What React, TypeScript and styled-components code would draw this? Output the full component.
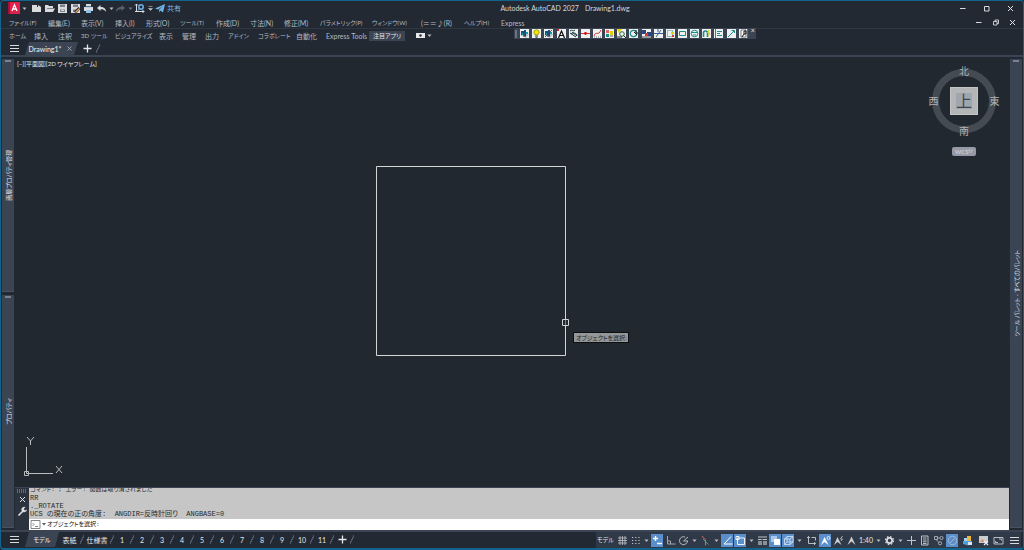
import React from "react";
import styled, { createGlobalStyle, css } from "styled-components";

const c = {
  bg: "#222933",
  canvas: "#212830",
  panel: "#3b4453",
  dark: "#2b333f",
  edge: "#12648c",
  text: "#b4b9c0",
  bright: "#e4e7ea",
  line: "#2f3743",
  active: "#5b8fcb",
};

const GlobalStyle = createGlobalStyle`
  * { box-sizing: border-box; }
  body {
    margin: 0;
    background: ${c.bg};
    font-family: Lato, "Noto Sans CJK JP", sans-serif;
    font-size: 7px;
    line-height: 10px;
    color: ${c.text};
    font-feature-settings: "palt";
  }
  button, input {
    font: inherit;
    color: inherit;
    font-feature-settings: inherit;
    background: none;
    border: 0;
    padding: 0;
    margin: 0;
    white-space: nowrap;
  }
  svg { display: block; flex: none; }
`;

const Window = styled.div`
  display: flex;
  flex-direction: column;
  min-height: 100vh;
  border: 1px solid ${c.edge};
  border-bottom-width: 2px;
  border-radius: 4px;
  background: ${c.bg};
  overflow: hidden;
  position: relative;
`;

/* ---------- top area ---------- */

const TitleBar = styled.header`
  display: grid;
  grid-template-columns: 1fr auto 1fr;
  align-items: center;
  height: 16px;
  padding: 0 1px 2px 7px;
`;

const QuickAccess = styled.div`
  display: flex;
  align-items: center;
`;

const AppButton = styled.button`
  display: flex;
  align-items: center;
  justify-content: center;
  width: 12px;
  height: 12px;
`;

const IconButton = styled.button<{ $w?: number }>`
  display: flex;
  align-items: center;
  justify-content: center;
  width: ${(p) => p.$w ?? 13}px;
  height: 12px;
`;

const Share = styled.button`
  display: flex;
  align-items: center;
  gap: 1px;
  margin-left: 1px;
  color: #7fb9e6;
`;

const Title = styled.h1`
  display: flex;
  gap: 6px;
  margin: 0;
  padding-left: 100px;
  font-size: 7px;
  font-weight: 400;
  color: #d6d9dd;
`;

const WindowButtons = styled.div<{ $w: number }>`
  display: flex;
  justify-content: flex-end;
  margin-left: auto;
  ${IconButton} {
    width: ${(p) => p.$w}px;
  }
`;

const MenuBar = styled.nav`
  display: flex;
  align-items: center;
  height: 12px;
  padding-left: 8px;
  padding-right: 2px;
  border-bottom: 1px solid ${c.line};
`;

const MenuItem = styled.button<{ $w: number; $kana?: boolean }>`
  width: ${(p) => p.$w}px;
  text-align: left;
  font-size: ${(p) => (p.$kana ? 6 : 7)}px;
`;

const Ribbon = styled.nav`
  display: flex;
  align-items: center;
  height: 13px;
  padding-left: 8px;
`;

const RibbonTab = styled(MenuItem)<{ $on?: boolean }>`
  ${(p) =>
    p.$on &&
    css`
      margin-left: -5px;
      text-align: center;
      background: ${c.panel};
      color: ${c.bright};
    `}
`;

const RibbonExtras = styled.div`
  display: flex;
  align-items: center;
  margin-left: 9px;
`;

const Toolbar = styled.div`
  position: absolute;
  top: 27px;
  left: 513px;
  width: 242px;
  height: 11px;
  padding: 0 1px;
  display: flex;
  align-items: center;
  justify-content: space-between;
  background: ${c.panel};
`;

const ToolGrip = styled.span`
  width: 2px;
  height: 8px;
  background: #6a7382;
`;

const Tool = styled.button`
  width: 9px;
  height: 9px;
  background: #eef0f0;
`;

const CloseTool = styled.button`
  align-self: flex-start;
  font-size: 7px;
  line-height: 5px;
  color: ${c.bright};
`;

const TabRow = styled.div`
  display: flex;
  align-items: center;
  height: 13px;
  padding-left: 8px;
`;

const SlantTab = styled.div<{ $w: number; $kana?: boolean }>`
  display: flex;
  align-items: center;
  justify-content: center;
  gap: 2px;
  align-self: stretch;
  width: ${(p) => p.$w}px;
  font-size: ${(p) => (p.$kana ? 6 : 7)}px;
  font-weight: 500;
  background: ${c.panel};
  color: ${c.bright};
  clip-path: polygon(4px 0, 100% 0, calc(100% - 4px) 100%, 0 100%);
  margin-left: 5px;
`;

const Band = styled.div`
  height: 2px;
  background: ${c.panel};
`;

/* ---------- work area ---------- */

const Work = styled.main`
  flex: 1;
  display: flex;
`;

const Dock = styled.aside`
  display: flex;
  flex-direction: column;
  gap: 3px;
  width: 14px;
  padding: 2px 1px;
`;

const Palette = styled.section`
  position: relative;
  flex: 1;
  display: flex;
  align-items: center;
  justify-content: center;
  background: ${c.panel};
  border-bottom: 1px solid #4a5362;
`;

const PaletteGrip = styled.span`
  position: absolute;
  top: 1px;
  left: 3px;
  width: 6px;
  height: 2px;
  background: #7a8290;
`;

const PaletteTitle = styled.h2`
  margin: 0;
  font-size: 6px;
  font-weight: 400;
  line-height: 11px;
  color: #dde0e4;
  writing-mode: vertical-rl;
  text-orientation: sideways;
  transform: rotate(180deg);
  white-space: nowrap;
`;

const Center = styled.div`
  flex: 1;
  min-width: 0;
  display: flex;
  flex-direction: column;
`;

const Canvas = styled.div`
  position: relative;
  flex: 1;
  background: ${c.canvas};
`;

const ViewLabel = styled.div`
  padding: 2px;
  font-size: 6px;
  color: #e4e7ea;
`;

const Sketch = styled.svg`
  position: absolute;
  left: 360px;
  top: 108px;
`;

const Prompt = styled.div`
  position: absolute;
  left: 558px;
  top: 275px;
  width: 56px;
  height: 11px;
  padding-left: 2px;
  font-size: 6px;
  line-height: 9px;
  color: #1c1f22;
  background: #949697;
  border: 1px solid #0c0e10;
  white-space: nowrap;
`;

const Ucs = styled.svg`
  position: absolute;
  left: 8px;
  bottom: 9px;
`;

const ViewCube = styled.div`
  position: absolute;
  right: 9px;
  top: 8px;
  width: 72px;
  height: 72px;
  display: grid;
  grid-template-columns: 11px 1fr 11px;
  grid-template-rows: 12px 1fr 12px;
  place-items: center;
  font-size: 10px;
  line-height: 12px;
  color: #b0b3b6;
  font-feature-settings: normal;
`;

const Ring = styled.span`
  position: absolute;
  left: 4px;
  top: 4px;
  width: 64px;
  height: 64px;
  border: 7px solid #444b53;
  border-radius: 50%;
`;

const Compass = styled.button<{ $area: string }>`
  grid-area: ${(p) => p.$area};
  position: relative;
`;

const CubeFace = styled.button`
  grid-area: 2 / 2;
  position: relative;
  width: 28px;
  height: 28px;
  padding: 5px;
  background: #b3b5b6;
  border: 1px solid #c4c6c6;
`;

const CubeInner = styled.span`
  display: block;
  height: 16px;
  line-height: 16px;
  font-size: 16px;
  background: #a1a6ae;
  color: #3f464f;
`;

const Wcs = styled.button`
  position: absolute;
  right: 33px;
  top: 90px;
  display: flex;
  align-items: center;
  justify-content: space-between;
  width: 24px;
  height: 9px;
  padding: 0 3px;
  border-radius: 2px;
  background: #969aa6;
  color: #d8dae0;
  font-size: 6px;
`;

const Command = styled.section`
  display: grid;
  grid-template-columns: 14px 1fr;
  border-top: 1px solid ${c.panel};
  background: ${c.dark};
`;

const CommandSide = styled.div`
  display: flex;
  flex-direction: column;
  align-items: center;
  padding-top: 1px;
`;

const CommandBody = styled.div`
  font-family: "Liberation Mono", "Noto Sans CJK JP", monospace;
  color: #26292c;
`;

const History = styled.div`
  display: flex;
  flex-direction: column;
  justify-content: flex-end;
  height: 31px;
  padding: 0 1px 1px;
  overflow: hidden;
  background: #c6c6c6;
`;

const HistoryLine = styled.div<{ $kana?: boolean }>`
  flex: none;
  height: 8px;
  font-size: ${(p) => (p.$kana ? 6 : 7)}px;
  line-height: 8px;
  white-space: pre;
`;

const InputLine = styled.label`
  display: flex;
  align-items: center;
  gap: 1px;
  height: 11px;
  padding-left: 1px;
  font-size: 6px;
  color: #101214;
  background: #ffffff;
  input {
    flex: 1;
    outline: 0;
  }
`;

/* ---------- status bar ---------- */

const Status = styled.footer`
  display: flex;
  align-items: stretch;
  justify-content: space-between;
  height: 16px;
  padding-right: 2px;
`;

const LayoutTabs = styled.div`
  display: flex;
  align-items: center;
  padding-left: 8px;
  padding-bottom: 1px;
`;

const LayoutTab = styled.button<{ $w: number }>`
  width: ${(p) => p.$w}px;
  font-size: 7px;
  color: ${c.bright};
`;

const Slash = styled.span`
  width: 4px;
  height: 9px;
  background: linear-gradient(to bottom right, transparent 40%, #505967 40%, #505967 60%, transparent 60%);
`;

const StatusTools = styled.div`
  display: flex;
  align-items: center;
  background: #303947;
`;

const StatusButton = styled.button<{ $w: number; $on?: boolean; $kana?: boolean }>`
  display: flex;
  align-items: center;
  justify-content: center;
  width: ${(p) => p.$w}px;
  height: 13px;
  font-size: ${(p) => (p.$kana ? 6 : 7)}px;
  color: ${c.bright};
  background: ${(p) => (p.$on ? c.active : "transparent")};
  background-clip: padding-box;
  border-right: 1px solid transparent;
`;

/* ---------- icons ---------- */

const glyphs: Record<string, React.ReactNode> = {
  caret: <path d="M3.5 4.500h4l-2 2.5z" fill="#b9bdc3" />,
  caretDim: <path d="M3.5 4.500h4l-2 2.5z" fill="#6d7580" />,
  newFile: <path d="M1 2h5v2h4v5H1zM7 2l3 2H7z" fill="#d9dbdd" />,
  open: <path d="M1 9V2h3l1 1h4v2H3.500L2 8l1.500-2.500H11L9 9z" fill="#d9dbdd" />,
  save: (
    <>
      <path d="M1 1h9v9H1z" fill="#d9dbdd" />
      <path d="M3 1.500h5V4H3zM3 6.500h5V9H3z" fill="#7b828d" />
      <path d="M4 7.500h3" stroke="#d9dbdd" />
    </>
  ),
  saveAs: (
    <>
      <path d="M1 1h9v9H1z" fill="#d9dbdd" />
      <path d="M3 1.500h5V4H3zM3 6.500h3V9H3z" fill="#7b828d" />
      <path d="M5 9.500L9.500 5" stroke="#222933" strokeWidth="3" />
      <path d="M5.500 9.500L9.500 5.500" stroke="#e9a25b" strokeWidth="1.500" />
    </>
  ),
  print: (
    <>
      <path d="M3 1h5v2H3zM1 4h9v4H1z" fill="#d9dbdd" />
      <path d="M3 7h5v3H3z" fill="#8cc4ee" />
      <path d="M2.500 4h6" stroke="#8cc4ee" />
    </>
  ),
  undo: <path d="M1 5l3.500-3v2C8 4 10 5.500 10 9 8.500 6.500 7 6.200 4.500 6.200V8z" fill="#d9dbdd" />,
  redo: <path d="M10 5L6.500 2v2C3 4 1 5.500 1 9c1.500-2.500 3-2.800 5.500-2.800V8z" fill="#566070" />,
  axes: (
    <g fill="none">
      <path d="M2.500 1v7.500H10M1 2.500L2.500 1 4 2.500M8.500 7L10 8.500 8.500 10M1 8.500h3" stroke="#d9dbdd" />
      <circle cx="7" cy="4" r="2.200" stroke="#6fb3e8" strokeWidth="1.500" />
      <path d="M5.500 5.500L4 7.500" stroke="#6fb3e8" />
    </g>
  ),
  more: <path d="M3.500 3.500h4M3.500 5.500h4l-2 2z" stroke="#b9bdc3" strokeWidth=".6" fill="#b9bdc3" />,
  plane: <path d="M0 5.500L10 1 8 9.500 5.500 7.500 4.500 9.500 4 6.800 8 3 3 6.500z" fill="#6fb3e8" />,
  min: <path d="M3 5.500h5.500" stroke="#d9dbdd" />,
  max: <path d="M3.500 3.500h4.500v4.500H3.500z" stroke="#d9dbdd" fill="none" />,
  close: <path d="M3 3l5 5M8 3L3 8" stroke="#e4e7ea" />,
  restore: <path d="M3.500 4.500h3.500v3.500H3.500zM5 4.500V3h3.500v3.500H7" stroke="#d9dbdd" strokeWidth=".9" fill="none" />,
  burger: <path d="M1 2.500h9M1 5.500h9M1 8.500h9" stroke="#d9dbdd" strokeWidth="1.200" />,
  plus: <path d="M5.500 1.500v8M1.500 5.500h8" stroke="#e4e7ea" strokeWidth="1.300" />,
  tabX: <path d="M3.500 3.500l4 4M7.500 3.500l-4 4" stroke="#9aa1aa" />,
  panel: (
    <>
      <path d="M1 3h9v5H1z" fill="#e6e8ea" />
      <circle cx="5.500" cy="5.500" r="1.200" fill="#222933" />
    </>
  ),
  wrench: (
    <>
      <path d="M1.500 9.500L6 5" stroke="#d9dbdd" strokeWidth="1.700" />
      <path d="M8.500 1A2.800 2.800 0 1 0 10 3.500L8 4.500 6.800 3z" fill="#d9dbdd" />
    </>
  ),
  grid: <path d="M3 1v9M5.500 1v9M8 1v9M1 3h9M1 5.500h9M1 8h9" stroke="#c3c7cc" strokeWidth=".8" />,
  dots: <path d="M2 2.500h8M2 5.500h8M2 8.500h8" stroke="#c3c7cc" strokeWidth="1.200" strokeDasharray="1.200 2" />,
  dyn: <path d="M3.500 1v5M1 3.500h5M5 8.500h5" stroke="#fff" strokeWidth="1.300" />,
  ortho: <path d="M2.500 1v8h8M2.500 6h3v3" stroke="#aeb3ba" strokeWidth=".9" fill="none" />,
  polar: (
    <g fill="none" stroke="#c3c7cc" strokeWidth=".9">
      <path d="M9.500 6A4 4 0 1 1 7 2" />
      <path d="M10 2L5.500 6H10" />
    </g>
  ),
  iso: (
    <>
      <path d="M5.500 5v5.500M5.500 5L2 1" stroke="#d4686f" />
      <path d="M8.500 9.500L3 4" stroke="#5fae83" strokeWidth=".8" />
    </>
  ),
  angle: <path d="M9 1.500L2 9h8.500" stroke="#fff" fill="none" />,
  osnap: <path d="M2.500 3h7v6.500h-7zM1 1.500h3v3H1z" stroke="#fff" strokeWidth=".9" fill="none" />,
  weight: (
    <>
      <path d="M1 2h9M1 4.500h3.500M5.500 4.500h4.500" stroke="#c3c7cc" />
      <path d="M1 7h4M6 7h4M1 9h4M6 9h4" stroke="#e4e7ea" strokeWidth="1.200" />
    </>
  ),
  transp: (
    <>
      <path d="M1 1h6v6H1z" fill="#a9c8ea" />
      <path d="M4 4h6v6H4z" fill="#fff" />
    </>
  ),
  cube: <path d="M1.500 4h5.500v5.500H1.500zM1.500 4L4 1.500h6L7 4M10 1.500V7L7 9.500M4 1.500V7h6M4 7L1.500 9.500" stroke="#e6f0fa" strokeWidth=".7" fill="none" />,
  ucs: <path d="M2.500 1.500v7h7M1 3l1.500-1.500L4 3M8 7l1.500 1.500L8 10M5.500 2.500h4v3" stroke="#c9cdd2" strokeWidth=".9" fill="none" />,
  annoA: (
    <>
      <path d="M1 10L4.500 2 8.500 10 4.500 7z" fill="#fff" />
      <circle cx="8.500" cy="3" r="1.500" fill="none" stroke="#fff" strokeWidth=".8" />
    </>
  ),
  annoB: (
    <>
      <path d="M1 10L4.500 2 8.500 10 4.500 7z" fill="#c9cdd2" />
      <path d="M9.500 1L7.500 4h2L8 6" stroke="#c9cdd2" strokeWidth=".8" fill="none" />
    </>
  ),
  annoC: <path d="M1.500 10L5.500 1.500 9.500 10 5.500 6.500z" fill="#c9cdd2" />,
  gear: (
    <>
      <circle cx="5.500" cy="5.500" r="2.600" fill="none" stroke="#d9dbdd" strokeWidth="1.800" />
      <circle cx="5.500" cy="5.500" r="4" fill="none" stroke="#d9dbdd" strokeWidth="1.300" strokeDasharray="1.600 1.540" />
    </>
  ),
  plusThin: <path d="M5.500 1v9M1 5.500h9" stroke="#c3c7cc" />,
  list: (
    <g fill="none" stroke="#c9cdd2" strokeWidth=".9">
      <path d="M2.500 1h6.500v9H2.500zM4 3h3.500M4 5h3.500M4 6.800h3.500M4 8.500h3.500" />
    </g>
  ),
  nodes: (
    <g fill="none" stroke="#aeb3ba" strokeWidth=".9">
      <path d="M1.500 1.500h3v3h-3zM4.500 3h2M3 4.500l3 3" />
      <circle cx="8.500" cy="3" r="1.600" />
      <circle cx="7" cy="8.300" r="1.600" />
    </g>
  ),
  clean: (
    <g fill="none" stroke="#a9bdd6" strokeWidth=".9">
      <circle cx="5.500" cy="5.500" r="4.300" />
      <path d="M3 8l5-5" />
    </g>
  ),
  hardware: (
    <>
      <path d="M5 1h4v5H5z" fill="#e9b93d" />
      <path d="M1 6h9v3l-4 1.500L1 9z" fill="#4f9ee0" />
      <path d="M2 3h3v3H2z" fill="#a8d0f2" />
      <path d="M6 7h4v3H6z" fill="#dfe6ee" />
    </>
  ),
  picture: (
    <>
      <path d="M1 1h9v7H1z" fill="#c9cdd2" />
      <path d="M2 7l2.500-3L7 7z" fill="#e08c6a" />
      <path d="M6 6l4 4M10 6l-4 4" stroke="#e9edf0" strokeWidth="1.200" />
    </>
  ),
  full: <path d="M1 2.500h9v6.500H1zM6 4h2.500v1.500M5 7.500H2.500V6" stroke="#c9cdd2" strokeWidth=".9" fill="none" />,
  prompt: <path d="M1 1.500h9v8H1zM2.500 4L4 5.500 2.500 7M5 7.500h3" stroke="#62676c" strokeWidth=".8" fill="none" />,
  promptCaret: <path d="M0 4h4L2 6.500z" fill="#555a5f" />,
};

const Icon = ({ name, w = 11 }: { name: string; w?: number }) => (
  <svg width={w} height={11} viewBox={`0 0 ${w} 11`} aria-hidden="true">
    {glyphs[name]}
  </svg>
);

const T = "#1f8a8a";
const layerArt = (
  <>
    <path d="M0 6l3-2 6 1-3 4z" fill="#b8bcc4" />
    <path d="M1 2h3v4H1zM4 1h2v6H4z" fill="#1d4f7e" />
    <path d="M6 3h2v2H6zM2 4h1v2H2z" fill="#15a0b0" />
    <path d="M3 7h3" stroke="#333" />
  </>
);
const tools: [string, React.ReactNode][] = [
  ["画層", layerArt],
  [
    "画層 表示",
    <>
      <circle cx="4.5" cy="3.300" r="2.600" fill="#f5e500" stroke="#8a8200" strokeWidth=".7" />
      <path d="M3 7h3M3.500 8.300h2" stroke="#444" />
    </>,
  ],
  [
    "画層 非表示",
    <>
      {layerArt}
      <path d="M1 8l7-7" stroke="#333" strokeWidth=".8" />
    </>,
  ],
  [
    "文字",
    <>
      <path d="M1.500 9l3-7 3 7M3 6.500h3" stroke="#111" strokeWidth="1.200" fill="none" />
      <path d="M0 0h2v2H0z" fill="#d22" />
    </>,
  ],
  ["ハッチング", <path d="M1 2c2-2 3 1 5-1M1 4l6 4M3 3l5 4c0-3-4-4-6-2" stroke="#1b3a3a" fill="none" />],
  [
    "点",
    <>
      <path d="M0 4.500h9" stroke="#d33" />
      <circle cx="4.5" cy="4.500" r="1.400" fill="#c11" />
    </>,
  ],
  [
    "スプライン",
    <>
      <path d="M1 7C3 1 5 8 8 1" stroke="#d33" fill="none" />
      <path d="M1 8h7" stroke="#666" strokeDasharray="1 1" />
    </>,
  ],
  [
    "ブロック",
    <>
      <path d="M1 1h3v3H1z" fill="#d66" />
      <path d="M1 5h3v3H1z" fill={T} />
      <path d="M5 2h3v4H5z" fill="#e7d100" />
      <path d="M5 7h3" stroke="#555" />
    </>,
  ],
  [
    "検索",
    <>
      <path d="M0 0h5l-3 4z" fill="#e7d100" />
      <circle cx="5" cy="5" r="2.300" fill="none" stroke="#2a6b3a" />
      <path d="M6.500 6.500L9 9M0 8h5" stroke="#222" />
    </>,
  ],
  [
    "回転",
    <>
      <circle cx="4.500" cy="4.500" r="3.200" fill="none" stroke={T} strokeWidth="1.200" />
      <path d="M5 3l3 3M7 1v3h2" stroke="#222" fill="none" />
    </>,
  ],
  [
    "配列",
    <>
      <path d="M0 1h4v4H0zM5 3h4v4H5z" fill="#27457e" />
      <path d="M3 4h3v3H3z" fill="#d33" />
      <path d="M0 8h9" stroke="#444" />
    </>,
  ],
  ["トリム", <path d="M0 4.500h9M2 8l5-7M4 0v3" stroke="#345a9a" fill="none" />],
  [
    "ストレッチ",
    <>
      <path d="M1.500 1.500h5v6h-5z" stroke={T} strokeDasharray="1 1" fill="none" />
      <path d="M5 3h3v2H5z" fill="#e7d100" />
      <path d="M6 6h2v2H6z" fill="#d33" />
    </>,
  ],
  ["長方形", <path d="M1.500 2.500h6v4h-6z" stroke={T} fill="none" />],
  [
    "円",
    <>
      <circle cx="4.500" cy="4.500" r="3.300" fill="none" stroke={T} />
      <path d="M1 3.500h7M3 6h3" stroke={T} />
    </>,
  ],
  [
    "スナップ",
    <>
      <path d="M1.500 8V4a2 2 0 0 1 4 0v4" stroke={T} strokeWidth="1.600" fill="none" />
      <path d="M7 1L5.500 4H8L6 7" stroke="#e0c800" fill="none" />
    </>,
  ],
  ["位置合わせ", <path d="M1.500 0v9M3 2.500h5M3 4.500h3M3 6.500h5" stroke={T} />],
  ["線分", <path d="M1 8l6-6M4.500 1.500h3V4" stroke={T} fill="none" />],
  [
    "プロパティ",
    <>
      <path d="M2 1h5v7H2z" stroke="#555" fill="#fff" strokeWidth=".8" />
      <path d="M3 8l2-3V2h2v3H5" stroke="#111" fill="none" />
      <path d="M8.500 0v9" stroke={T} />
    </>,
  ],
];

/* ---------- data ---------- */

const menus: [string, number, boolean?][] = [
  ["ファイル(F)", 39, true],
  ["編集(E)", 33],
  ["表示(V)", 34],
  ["挿入(I)", 31],
  ["形式(O)", 34],
  ["ツール(T)", 36, true],
  ["作成(D)", 34],
  ["寸法(N)", 34],
  ["修正(M)", 36],
  ["パラメトリック(P)", 52, true],
  ["ウィンドウ(W)", 49, true],
  ["(＝＝♪(R)", 43],
  ["ヘルプ(H)", 37, true],
  ["Express", 24],
];

const ribbon: [string, number, boolean?][] = [
  ["ホーム", 25, true],
  ["挿入", 24],
  ["注釈", 23],
  ["3D ツール", 34, true],
  ["ビジュアライズ", 44, true],
  ["表示", 23],
  ["管理", 23],
  ["出力", 23],
  ["アドイン", 30, true],
  ["コラボレート", 38, true],
  ["自動化", 30],
  ["Express Tools", 48],
];

const sheets = ["1", "2", "3", "4", "5", "6", "7", "8", "9", "10", "11"];

type StatusItem = [string, string, number, boolean?];

const statusItems: StatusItem[] = [
  ["grid", "グリッド", 13],
  ["dots", "スナップ", 13],
  ["caret", "スナップ設定", 9],
  ["dyn", "ダイナミック入力", 13, true],
  ["ortho", "直交モード", 13],
  ["polar", "極トラッキング", 13],
  ["caret", "極設定", 9],
  ["iso", "アイソメ", 13],
  ["caret", "アイソメ設定", 9],
  ["angle", "オブジェクトスナップトラッキング", 13, true],
  ["osnap", "オブジェクトスナップ", 13, true],
  ["caret", "オブジェクトスナップ設定", 9],
  ["weight", "線の太さ", 13],
  ["transp", "透過性", 13, true],
  ["cube", "3D オブジェクトスナップ", 13, true],
  ["caret", "3D 設定", 9],
  ["ucs", "ダイナミック UCS", 15],
  ["annoA", "注釈の表示", 13, true],
  ["annoB", "自動尺度", 13],
  ["annoC", "注釈尺度", 13],
];

const statusTail: StatusItem[] = [
  ["caret", "尺度一覧", 8],
  ["gear", "ワークスペース", 13],
  ["caret", "ワークスペース一覧", 9],
  ["plusThin", "注釈モニター", 13],
  ["list", "クイックプロパティ", 13],
  ["nodes", "選択の循環", 15],
  ["clean", "選択表示", 13, true],
  ["hardware", "ハードウェア", 18],
  ["picture", "イメージ", 13],
  ["full", "フルスクリーン", 18],
  ["burger", "カスタマイズ", 13],
];

const log: [string, boolean?][] = [
  ["コマンド: ; エラー: 関数は取り消されました", true],
  ["RR"],
  ["._ROTATE"],
  ["UCS の現在の正の角度:  ANGDIR=反時計回り  ANGBASE=0"],
];

const quick: [string, string, number][] = [
  ["caret", "アプリケーションメニュー", 9],
  ["newFile", "新規", 14],
  ["open", "開く", 13],
  ["save", "上書き保存", 13],
  ["saveAs", "名前を付けて保存", 13],
  ["print", "印刷", 13],
  ["undo", "元に戻す", 13],
  ["caret", "履歴", 6],
  ["redo", "やり直し", 13],
  ["caretDim", "やり直し履歴", 6],
  ["axes", "移動", 13],
  ["more", "その他", 8],
];

const StatusGroup = ({ items }: { items: StatusItem[] }) => (
  <>
    {items.map(([icon, label, w, on]) => (
      <StatusButton key={label} aria-label={label} $w={w} $on={on}>
        <Icon name={icon} />
      </StatusButton>
    ))}
  </>
);

export default function App() {
  return (
    <>
      <GlobalStyle />
      <Window lang="ja">
        <TitleBar>
          <QuickAccess>
            <AppButton aria-label="AutoCAD">
              <svg width="12" height="12" viewBox="0 0 12 12">
                <path d="M0 0h12v12H0z" fill="#e0204d" />
                <path d="M0 0h2v12H0z" fill="#a3123a" />
                <path d="M4 9l2.500-6L9 9M5 7h3" stroke="#fff" strokeWidth="1.300" fill="none" />
              </svg>
            </AppButton>
            {quick.map(([icon, label, w]) => (
              <IconButton key={label} aria-label={label} $w={w}>
                <Icon name={icon} />
              </IconButton>
            ))}
            <Share>
              <Icon name="plane" />
              共有
            </Share>
          </QuickAccess>
          <Title>
            <span>Autodesk AutoCAD 2027</span>
            <span>Drawing1.dwg</span>
          </Title>
          <WindowButtons $w={24}>
            <IconButton aria-label="最小化"><Icon name="min" /></IconButton>
            <IconButton aria-label="最大化"><Icon name="max" /></IconButton>
            <IconButton aria-label="閉じる"><Icon name="close" /></IconButton>
          </WindowButtons>
        </TitleBar>

        <MenuBar>
          {menus.map(([label, w, kana]) => (
            <MenuItem key={label} $w={w} $kana={kana}>{label}</MenuItem>
          ))}
          <WindowButtons $w={17}>
            <IconButton aria-label="図面を最小化"><Icon name="min" /></IconButton>
            <IconButton aria-label="図面を元に戻す"><Icon name="restore" /></IconButton>
            <IconButton aria-label="図面を閉じる"><Icon name="close" /></IconButton>
          </WindowButtons>
        </MenuBar>

        <Ribbon>
          {ribbon.map(([label, w, kana]) => (
            <RibbonTab key={label} $w={w} $kana={kana}>{label}</RibbonTab>
          ))}
          <RibbonTab $w={36} $kana $on>注目アプリ</RibbonTab>
          <RibbonExtras>
            <IconButton $w={13} aria-label="パネル表示"><Icon name="panel" /></IconButton>
            <IconButton $w={4} aria-label="パネル表示の設定"><Icon name="caret" /></IconButton>
          </RibbonExtras>
        </Ribbon>

        <Toolbar>
          <ToolGrip />
          {tools.map(([label, art]) => (
            <Tool key={label} aria-label={label}>
              <svg width="9" height="9" viewBox="0 0 9 9">{art}</svg>
            </Tool>
          ))}
          <CloseTool aria-label="ツールバーを閉じる">×</CloseTool>
        </Toolbar>

        <TabRow>
          <Icon name="burger" />
          <SlantTab $w={53}>
            Drawing1*
            <Icon name="tabX" />
          </SlantTab>
          <IconButton $w={18} aria-label="新規図面"><Icon name="plus" /></IconButton>
          <Slash />
        </TabRow>
        <Band />

        <Work>
          <Dock>
            <Palette>
              <PaletteGrip />
              <PaletteTitle>画層プロパティ管理</PaletteTitle>
            </Palette>
            <Palette>
              <PaletteGrip />
              <PaletteTitle>プロパティ</PaletteTitle>
            </Palette>
          </Dock>

          <Center>
            <Canvas>
              <ViewLabel>[−][平面図][2D ワイヤフレーム]</ViewLabel>
              <Sketch width="196" height="192" viewBox="0 0 196 192">
                <g fill="none" stroke="#d3d5d6">
                  <path d="M1.500 1.500h189v189H1.500z" />
                  <path d="M187.500 154.500h6v6h-6z" fill={c.canvas} />
                  <path d="M190.500 155v5" stroke="#7d8286" />
                </g>
              </Sketch>
              <Prompt>オブジェクトを選択:</Prompt>
              <Ucs width="42" height="42" viewBox="0 0 42 42">
                <g fill="none" stroke="#b9bcbf">
                  <path d="M3.500 11v24M6 37.500h24M1.500 35.500h4v4h-4zM3.500 35v2.500H6" />
                  <path d="M4 1l3.500 4L11 1M7.500 5v4M33 30l6 7M39 30l-6 7" />
                </g>
              </Ucs>
              <ViewCube>
                <Ring />
                <Compass $area="1 / 2">北</Compass>
                <Compass $area="2 / 1">西</Compass>
                <CubeFace><CubeInner>上</CubeInner></CubeFace>
                <Compass $area="2 / 3">東</Compass>
                <Compass $area="3 / 2">南</Compass>
              </ViewCube>
              <Wcs>
                WCS
                <svg width="5" height="5" viewBox="0 0 5 5">
                  <path d="M.5 1h4l-2 3z" fill="none" stroke="#c3c6ce" strokeWidth=".7" />
                </svg>
              </Wcs>
            </Canvas>

            <Command>
              <CommandSide>
                <svg width="10" height="4" viewBox="0 0 10 4">
                  <path d="M0 1h10M0 3h10" stroke="#9aa0a8" strokeDasharray="1 1" />
                </svg>
                <IconButton aria-label="コマンドラインを閉じる"><Icon name="close" /></IconButton>
                <IconButton aria-label="設定"><Icon name="wrench" /></IconButton>
              </CommandSide>
              <CommandBody>
                <History>
                  {log.map(([line, kana]) => (
                    <HistoryLine key={line} $kana={kana}>{line}</HistoryLine>
                  ))}
                </History>
                <InputLine>
                  <Icon name="prompt" />
                  <Icon name="promptCaret" w={4} />
                  <input aria-label="コマンド" defaultValue="オブジェクトを選択:" />
                </InputLine>
              </CommandBody>
            </Command>
          </Center>

          <Dock>
            <Palette>
              <PaletteGrip />
              <PaletteTitle>ツール パレット - すべてのパレット</PaletteTitle>
            </Palette>
          </Dock>
        </Work>
        <Band />

        <Status>
          <LayoutTabs>
            <Icon name="burger" />
            <SlantTab $w={34} $kana as="button">モデル</SlantTab>
            <LayoutTab $w={21}>表紙</LayoutTab>
            <Slash />
            <LayoutTab $w={26}>仕様書</LayoutTab>
            <Slash />
            {sheets.map((n) => (
              <React.Fragment key={n}>
                <LayoutTab $w={16}>{n}</LayoutTab>
                <Slash />
              </React.Fragment>
            ))}
            <IconButton $w={16} aria-label="新規レイアウト"><Icon name="plus" /></IconButton>
            <Slash />
          </LayoutTabs>
          <StatusTools>
            <StatusButton $w={20} $kana>モデル</StatusButton>
            <StatusGroup items={statusItems} />
            <StatusButton $w={17}>1:40</StatusButton>
            <StatusGroup items={statusTail} />
          </StatusTools>
        </Status>
      </Window>
    </>
  );
}
